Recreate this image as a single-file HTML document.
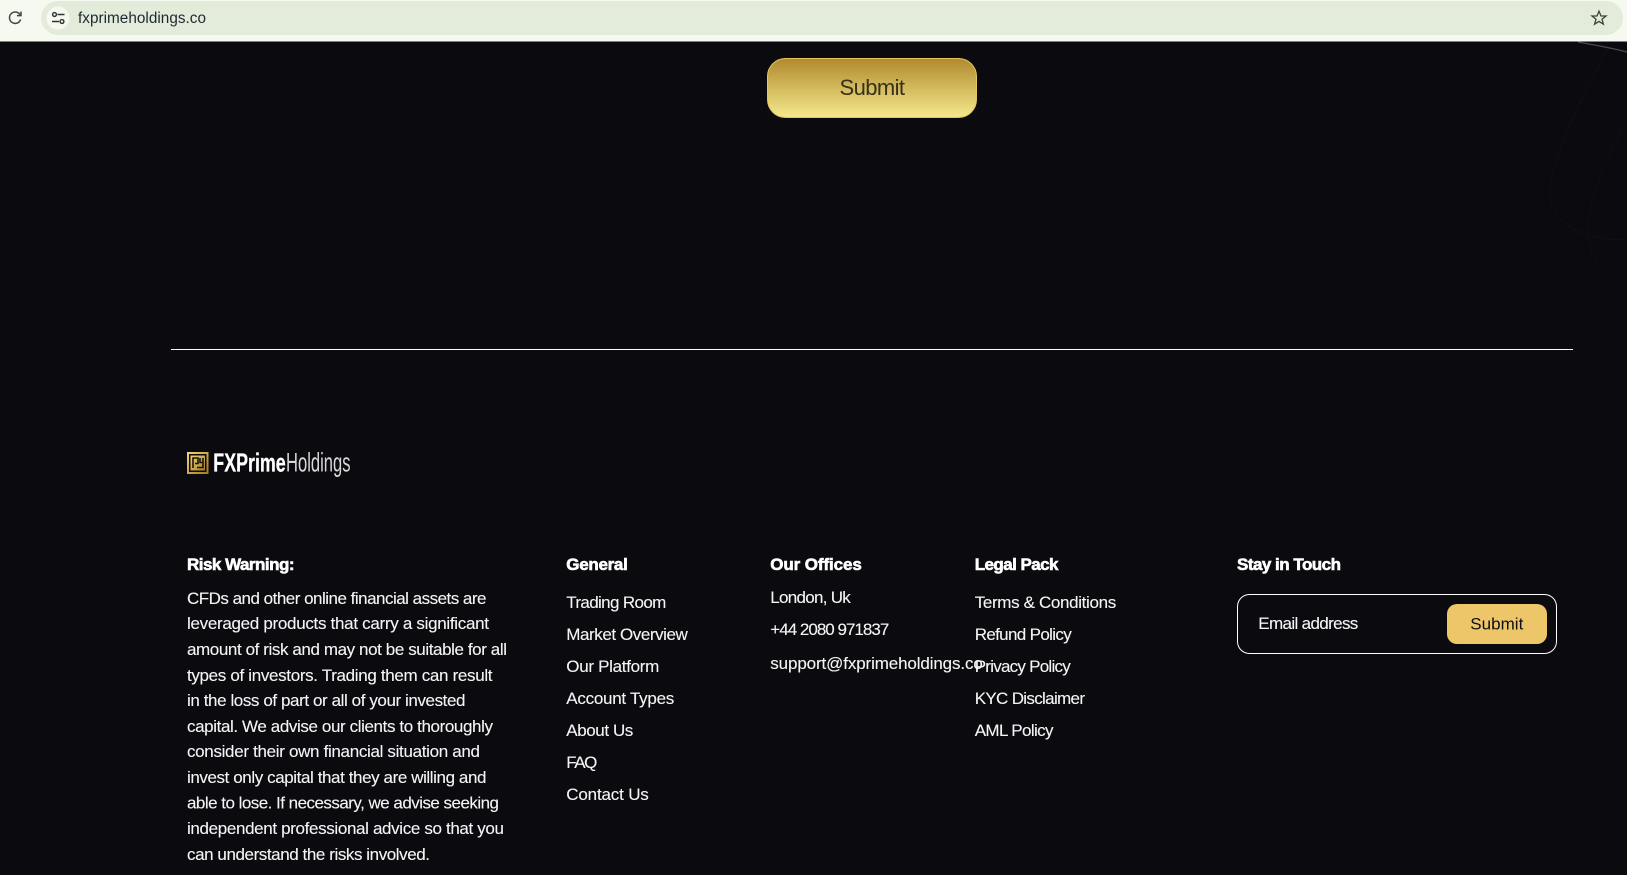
<!DOCTYPE html>
<html lang="en">
<head>
<meta charset="utf-8">
<title>FXPrime Holdings</title>
<style>
html,body{margin:0;padding:0;background:#0a0a0f;width:1627px;height:875px;overflow:hidden}
svg{display:block;position:absolute;left:0;top:0}
text{font-family:"Liberation Sans",sans-serif;white-space:pre}
.b{font-size:17px;fill:#f4f4f4;stroke:#f4f4f4;stroke-width:.12px}
.h{font-size:17px;font-weight:bold;fill:#fff;stroke:#fff;stroke-width:.6px}
</style>
</head>
<body>
<svg width="1627" height="875" viewBox="0 0 1627 875" xmlns="http://www.w3.org/2000/svg">
<defs>
<linearGradient id="g" x1="0" y1="0" x2="0" y2="1">
<stop offset="0" stop-color="#b08a2e"/>
<stop offset="1" stop-color="#f5e98c"/>
</linearGradient>
<linearGradient id="lg" x1="0" y1="0" x2="1" y2="1">
<stop offset="0" stop-color="#f3d46e"/>
<stop offset="1" stop-color="#a67c22"/>
</linearGradient>
</defs>
<rect width="1627" height="875" fill="#0a0a0f"/>

<!-- decorative curves -->
<path d="M1578 42C1595 45 1612 48 1627 52" fill="none" stroke="#4a4a4f" stroke-width="1.2"/>
<path d="M1607 50C1580 100 1550 160 1550 195C1552 225 1585 240 1627 240" fill="none" stroke="#101014" stroke-width="1"/>
<path d="M1627 120C1605 160 1588 200 1588 232C1590 262 1605 280 1627 287" fill="none" stroke="#101014" stroke-width="1"/>

<!-- browser bar -->
<rect width="1627" height="41.5" fill="#f6f9f0"/>
<rect x="41" y="1" width="1582" height="34" rx="17" fill="#e3ebda"/>
<circle cx="58" cy="18" r="11.5" fill="#f6f9f0"/>
<path d="M21 11.5V15.6H16.9M20.4 15.4A5.7 5.7 0 1 0 20.6 19.5" fill="none" stroke="#3f4a42" stroke-width="1.5"/>
<g fill="none" stroke="#2c3530" stroke-width="1.4">
<circle cx="54.5" cy="14.5" r="1.9"/>
<path d="M57.5 14.5H64.5M52 21.5H59"/>
<circle cx="62" cy="21.5" r="1.9"/>
</g>
<text x="78" y="22.8" font-size="15.3" fill="#1d2a33" textLength="128">fxprimeholdings.co</text>
<path d="M1599 11.2L1601 16H1606L1602 19.2L1603.4 24.2L1599 21.4L1594.6 24.2L1596 19.2L1592 16H1597Z" fill="none" stroke="#3c443e" stroke-width="1.3" stroke-linejoin="miter"/>

<!-- top submit -->
<rect x="767.5" y="58.5" width="209" height="59" rx="18" fill="url(#g)" stroke="#e7c65e" stroke-width="1"/>
<text x="839.5" y="95" font-size="22" fill="#37301a" textLength="65.5">Submit</text>

<!-- divider -->
<rect x="171" y="349" width="1402" height="1" fill="#fff"/>

<!-- logo -->
<rect x="188" y="453" width="19.5" height="20" fill="none" stroke="url(#lg)" stroke-width="2"/>
<rect x="190.5" y="455.5" width="14.5" height="15" fill="url(#lg)"/>
<path d="M193 468V458H198V463.5H195M200 458V462.5H203M203 458V467.5H197" fill="none" stroke="#1a1610" stroke-width="1.6"/>
<text x="213.3" y="471.5" font-size="26" font-weight="bold" fill="#fff" stroke="#fff" stroke-width=".3" textLength="72.4" lengthAdjust="spacingAndGlyphs">FXPrime</text>
<text x="286" y="471.5" font-size="27" fill="#d8d8d8" textLength="64.5" lengthAdjust="spacingAndGlyphs">Holdings</text>

<!-- risk -->
<text class="h" x="187" y="570" textLength="107.5">Risk Warning:</text>
<text class="b" x="187" y="604" textLength="299.5">CFDs and other online financial assets are</text>
<text class="b" x="187" y="629" textLength="302">leveraged products that carry a significant</text>
<text class="b" x="187" y="655" textLength="320">amount of risk and may not be suitable for all</text>
<text class="b" x="187" y="681" textLength="305.5">types of investors. Trading them can result</text>
<text class="b" x="187" y="706" textLength="278.5">in the loss of part or all of your invested</text>
<text class="b" x="187" y="732" textLength="306">capital. We advise our clients to thoroughly</text>
<text class="b" x="187" y="757" textLength="293">consider their own financial situation and</text>
<text class="b" x="187" y="783" textLength="299.5">invest only capital that they are willing and</text>
<text class="b" x="187" y="808.5" textLength="312">able to lose. If necessary, we advise seeking</text>
<text class="b" x="187" y="834" textLength="317">independent professional advice so that you</text>
<text class="b" x="187" y="860" textLength="243">can understand the risks involved.</text>

<!-- general -->
<text class="h" x="566.3" y="570" textLength="61.5">General</text>
<text class="b" x="566.3" y="607.8" textLength="100">Trading Room</text>
<text class="b" x="566.3" y="639.8" textLength="121.5">Market Overview</text>
<text class="b" x="566.3" y="671.8" textLength="93">Our Platform</text>
<text class="b" x="566.3" y="703.8" textLength="108">Account Types</text>
<text class="b" x="566.3" y="735.8" textLength="67">About Us</text>
<text class="b" x="566.3" y="767.8" textLength="31">FAQ</text>
<text class="b" x="566.3" y="799.8" textLength="82.5">Contact Us</text>

<!-- offices -->
<text class="h" x="770.3" y="570" textLength="91.5">Our Offices</text>
<text class="b" x="770.3" y="603" textLength="80.5">London, Uk</text>
<text class="b" x="770.3" y="635" textLength="119">+44 2080 971837</text>
<text class="b" x="770.3" y="669" textLength="212.5">support@fxprimeholdings.co</text>

<!-- legal -->
<text class="h" x="974.7" y="570" textLength="83.8">Legal Pack</text>
<text class="b" x="974.7" y="607.8" textLength="141.5">Terms &amp; Conditions</text>
<text class="b" x="974.7" y="639.8" textLength="97">Refund Policy</text>
<text class="b" x="974.7" y="671.8" textLength="96">Privacy Policy</text>
<text class="b" x="974.7" y="703.8" textLength="110.3">KYC Disclaimer</text>
<text class="b" x="974.7" y="735.8" textLength="78.8">AML Policy</text>

<!-- stay in touch -->
<text class="h" x="1237" y="570" textLength="104">Stay in Touch</text>
<rect x="1237.5" y="594.5" width="319" height="59" rx="12" fill="none" stroke="#fff" stroke-width="1"/>
<text class="b" x="1258.3" y="629" textLength="100">Email address</text>
<rect x="1447" y="604" width="100" height="40" rx="10" fill="#ecc668"/>
<text x="1470.3" y="629.7" font-size="17" fill="#0d0d12" textLength="53">Submit</text>
</svg>
</body>
</html>
